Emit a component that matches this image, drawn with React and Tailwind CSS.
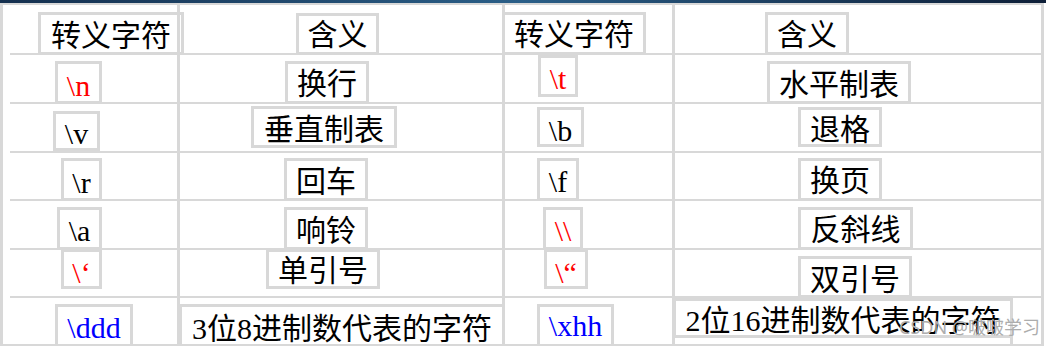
import React from "react";

function Box({ className, children, color = "text-black" }) {
  return (
    <div className={"shrink-0 flex justify-center border-[3px] border-[#d8d8d8] " + className}>
      <span className={"leading-[30px] whitespace-nowrap " + color}>{children}</span>
    </div>
  );
}

function Cell({ className, children }) {
  return (
    <div className={"flex items-start shrink-0 h-full border-r-[3px] border-[#d8d8d8] " + className}>
      {children}
    </div>
  );
}

function Sep() {
  return <div className="h-[2px] ml-[7px] bg-[#d8d8d8] shrink-0" />;
}

export default function App() {
  return (
    <div className="relative w-[1046px] h-[346px] overflow-hidden bg-white text-[30px] font-['Liberation_Serif','Noto_Sans_CJK_SC',serif]">
      <div className="h-[3px] bg-gradient-to-r from-[#15304f] via-[#2b5f88] to-[#0e1f38]" />
      <div className="flex flex-col w-[1044px] border-l-[3px] border-[#d8d8d8]">
        <div className="h-[2px] bg-[#d8d8d8] shrink-0" />

        <div className="flex h-[48px] shrink-0">
          <Cell className="w-[177px]">
            <Box className="ml-[35px] mt-[7px] w-[146px] h-[43px] pt-[6px]">转义字符</Box>
          </Cell>
          <Cell className="w-[325px]">
            <Box className="ml-[116px] mt-[8px] w-[83px] h-[42px] pt-[4px]">含义</Box>
          </Cell>
          <Cell className="w-[170px]">
            <Box className="ml-[-3px] mt-[7px] w-[144px] h-[43px] pt-[5px]">转义字符</Box>
          </Cell>
          <Cell className="w-[369px]">
            <Box className="ml-[90px] mt-[7px] w-[84px] h-[43px] pt-[5px]">含义</Box>
          </Cell>
        </div>
        <Sep />

        <div className="flex h-[47px] shrink-0">
          <Cell className="w-[177px]">
            <Box className="ml-[52px] mt-[6px] w-[47px] h-[43px] pt-[7px]" color="text-[#ff0000]">{"\\n"}</Box>
          </Cell>
          <Cell className="w-[325px]">
            <Box className="ml-[105px] mt-[6px] w-[84px] h-[43px] pt-[5px]">换行</Box>
          </Cell>
          <Cell className="w-[170px]">
            <Box className="ml-[33px] mt-[0px] w-[40px] h-[42px] pt-[6px]" color="text-[#ff0000]">{"\\t"}</Box>
          </Cell>
          <Cell className="w-[369px]">
            <Box className="ml-[92px] mt-[6px] w-[144px] h-[43px] pt-[6px]">水平制表</Box>
          </Cell>
        </div>
        <Sep />

        <div className="flex h-[47px] shrink-0">
          <Cell className="w-[177px]">
            <Box className="ml-[50px] mt-[7px] w-[47px] h-[40px] pt-[5px]">{"\\v"}</Box>
          </Cell>
          <Cell className="w-[325px]">
            <Box className="ml-[71px] mt-[2px] w-[146px] h-[42px] pt-[6px]">垂直制表</Box>
          </Cell>
          <Cell className="w-[170px]">
            <Box className="ml-[32px] mt-[3px] w-[47px] h-[40px] pt-[6px]">{"\\b"}</Box>
          </Cell>
          <Cell className="w-[369px]">
            <Box className="ml-[123px] mt-[3px] w-[84px] h-[40px] pt-[5px]">退格</Box>
          </Cell>
        </div>
        <Sep />

        <div className="flex h-[46px] shrink-0">
          <Cell className="w-[177px]">
            <Box className="ml-[58px] mt-[5px] w-[41px] h-[43px] pt-[7px]">{"\\r"}</Box>
          </Cell>
          <Cell className="w-[325px]">
            <Box className="ml-[104px] mt-[5px] w-[84px] h-[43px] pt-[6px]">回车</Box>
          </Cell>
          <Cell className="w-[170px]">
            <Box className="ml-[32px] mt-[5px] w-[42px] h-[43px] pt-[6px]">{"\\f"}</Box>
          </Cell>
          <Cell className="w-[369px]">
            <Box className="ml-[123px] mt-[5px] w-[84px] h-[43px] pt-[5px]">换页</Box>
          </Cell>
        </div>
        <Sep />

        <div className="flex h-[47px] shrink-0">
          <Cell className="w-[177px]">
            <Box className="ml-[54px] mt-[6px] w-[45px] h-[43px] pt-[6px]">{"\\a"}</Box>
          </Cell>
          <Cell className="w-[325px]">
            <Box className="ml-[104px] mt-[6px] w-[84px] h-[43px] pt-[6px]">响铃</Box>
          </Cell>
          <Cell className="w-[170px]">
            <Box className="ml-[38px] mt-[6px] w-[40px] h-[43px] pt-[6px]" color="text-[#ff0000]">{"\\\\"}</Box>
          </Cell>
          <Cell className="w-[369px]">
            <Box className="ml-[123px] mt-[6px] w-[115px] h-[43px] pt-[5px]">反斜线</Box>
          </Cell>
        </div>
        <Sep />

        <div className="flex h-[46px] shrink-0">
          <Cell className="w-[177px]">
            <Box className="ml-[58px] mt-[-1px] w-[41px] h-[40px] pt-[6px]" color="text-[#ff0000]">{"\\\u2018"}</Box>
          </Cell>
          <Cell className="w-[325px]">
            <Box className="ml-[86px] mt-[-1px] w-[114px] h-[40px] pt-[4px]">单引号</Box>
          </Cell>
          <Cell className="w-[170px]">
            <Box className="ml-[39px] mt-[-1px] w-[44px] h-[40px] pt-[6px]" color="text-[#ff0000]">{"\\\u201C"}</Box>
          </Cell>
          <Cell className="w-[369px]">
            <Box className="ml-[123px] mt-[6px] w-[114px] h-[42px] pt-[6px]">双引号</Box>
          </Cell>
        </div>
        <Sep />

        <div className="flex h-[46px] shrink-0">
          <Cell className="w-[177px]">
            <Box className="ml-[52px] mt-[6px] w-[78px] h-[45px] pt-[6px]" color="text-[#0000ff]">{"\\ddd"}</Box>
          </Cell>
          <Cell className="w-[325px]">
            <Box className="ml-[-1px] mt-[6px] w-[326px] h-[45px] pt-[7px]">3位8进制数代表的字符</Box>
          </Cell>
          <Cell className="w-[170px]">
            <Box className="ml-[32px] mt-[6px] w-[77px] h-[45px] pt-[4px]" color="text-[#0000ff]">{"\\xhh"}</Box>
          </Cell>
          <Cell className="w-[369px]">
            <Box className="ml-[-2px] mt-[0px] w-[340px] h-[40px] pt-[5px]">2位16进制数代表的字符</Box>
            <div className="shrink-0 ml-[-3px] w-[3px] h-[46px] bg-[#d8d8d8]" />
          </Cell>
        </div>
        <div className="h-[2px] bg-[#d8d8d8] shrink-0" />
      </div>

      <div className="absolute right-[6px] bottom-[9px] text-[18px] leading-[20px] text-[#adadad] font-['Noto_Sans','Noto_Sans_CJK_SC',sans-serif] whitespace-nowrap">
        CSDN @啵啵学习
      </div>
    </div>
  );
}
